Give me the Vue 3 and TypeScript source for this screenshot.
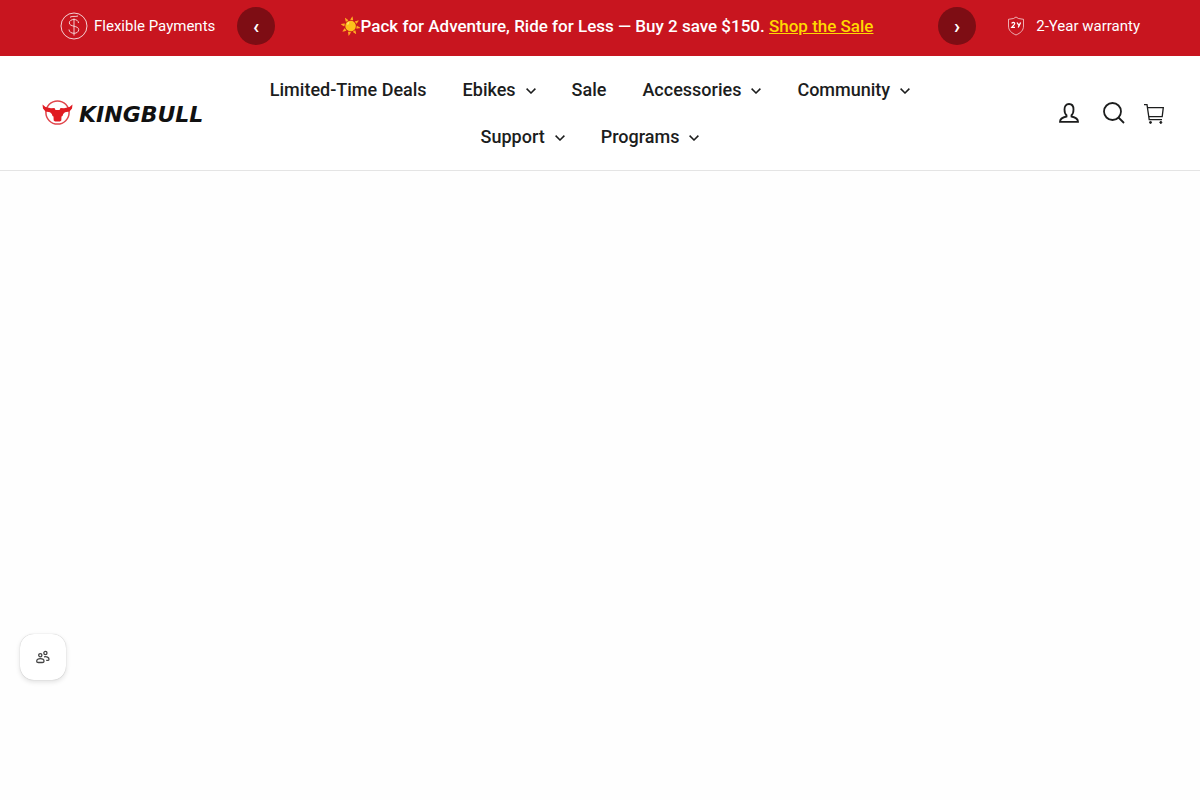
<script setup lang="ts">
interface NavItem {
  label: string
  menu: boolean
}

const items: NavItem[] = [
  { label: 'Limited-Time Deals', menu: false },
  { label: 'Ebikes', menu: true },
  { label: 'Sale', menu: false },
  { label: 'Accessories', menu: true },
  { label: 'Community', menu: true },
  { label: 'Support', menu: true },
  { label: 'Programs', menu: true },
]
</script>

<template>
  <div class="page">
    <section class="bar" aria-label="Announcements">
      <div class="perk">
        <svg class="coin" viewBox="0 0 28 28" fill="none" stroke="currentColor" aria-hidden="true">
          <circle cx="14" cy="14" r="13" />
          <path d="M10 5.200c3-1.600 5-.2 8-1.200M14 6.500v17M18.500 11c0-2.200-2-3.500-4.500-3.500s-4.700 1.200-4.700 3.400c0 4.200 9.400 2.400 9.400 6.700 0 2.300-2.100 3.700-4.700 3.700s-5-1.400-5-3.800" />
        </svg>
        <span>Flexible Payments</span>
      </div>
      <button class="arrow" type="button" aria-label="Previous announcement">‹</button>
      <p class="message">☀️Pack for Adventure, Ride for Less — Buy 2 save $150. <a href="#sale">Shop the Sale</a></p>
      <button class="arrow" type="button" aria-label="Next announcement">›</button>
      <div class="perk perk-end">
        <svg class="shield" viewBox="0 0 18 20" fill="none" stroke="currentColor" aria-hidden="true">
          <path opacity=".65" d="M9 1 L11.500 2.500 L16.500 3.300 V10 C16.500 14.500 13.500 17 9 19 C4.500 17 1.500 14.500 1.500 10 V3.300 L6.500 2.500 Z" />
          <path stroke-width="1.300" d="M4.800 7.500c.3-1.500 3-1.400 2.800.3-.1 1.200-1.700 2-2.800 3.500h3.200M10 6.500l1.800 2.700M13.600 6.500 11.200 11.500" />
        </svg>
        <span>2-Year warranty</span>
      </div>
    </section>

    <header class="header">
      <a class="logo" href="#home" aria-label="Kingbull">
        <svg class="bull" viewBox="0 0 31 26" aria-hidden="true">
          <circle cx="15.500" cy="12.500" r="11.600" fill="none" stroke="#e0444a" stroke-width="1.500" />
          <path fill="#e01b22" d="M.5 4.500 L3.500 7 L9 8.200 L12.500 8 L13.500 10 H17.500 L18.500 8 L22 8.200 L27.500 7 L30.500 4.500 L30 8.500 L27.500 11.500 L23 12.200 L21.200 14 L20.500 16 L19.500 16.500 L19.300 20.500 L18 21.500 H13 L11.700 20.500 L11.500 16.500 L10.500 16 L9.800 14 L8 12.200 L3.500 11.500 L1 8.500 Z" />
        </svg>
        <span class="wordmark">KINGBULL</span>
      </a>

      <nav aria-label="Main">
        <ul class="nav">
          <li v-for="item in items" :key="item.label">
            <a href="#">
              {{ item.label }}
              <svg v-if="item.menu" class="chevron" viewBox="0 0 10 6" fill="none" stroke="currentColor" stroke-width="1.500" aria-hidden="true">
                <path d="M.6.6 5 5 9.400.6" />
              </svg>
            </a>
          </li>
        </ul>
      </nav>

      <div class="tools">
        <a href="#account" aria-label="Account">
          <svg class="account" viewBox="0 0 20 20" fill="none" stroke="currentColor" stroke-width="1.800" aria-hidden="true">
            <path d="M7.500 12.200C6 11 5.500 9 5.500 6.500 5.500 3 7 1 10 1s4.500 2 4.500 5.500c0 2.500-.5 4.500-2 5.700v1.300c4 .8 6.500 2 6.500 5.300H1c0-3.300 2.500-4.500 6.500-5.300z" />
          </svg>
        </a>
        <a href="#search" aria-label="Search">
          <svg class="search" viewBox="0 0 22 22" fill="none" stroke="currentColor" stroke-width="1.800" aria-hidden="true">
            <circle cx="9.500" cy="9.500" r="8.500" />
            <path d="M15.500 15.500 21 21" />
          </svg>
        </a>
        <a class="cart-link" href="#cart" aria-label="Cart">
          <svg class="cart" viewBox="0 0 20 22" fill="none" stroke="currentColor" stroke-width="1.300" aria-hidden="true">
            <path d="M0 2.600H3L5.200 17.600H18M3.500 5.600H19.300L18.200 14.600H4.800" />
            <circle cx="6.500" cy="20.400" r="1" fill="currentColor" stroke-width="1" />
            <circle cx="16.800" cy="20.400" r="1" fill="currentColor" stroke-width="1" />
          </svg>
        </a>
      </div>
    </header>

    <main></main>

    <button class="community" type="button" aria-label="Open community">
      <svg viewBox="0 0 14 14" fill="none" stroke="currentColor" stroke-width="1.300" aria-hidden="true">
        <circle cx="4.300" cy="5.200" r="1.600" />
        <circle cx="9.400" cy="3" r="1.600" />
        <path d="M4.300 8.600c-2 0-3.600 1-3.600 2.600 0 1 .7 1.300 1.700 1.300h3.900c1 0 1.700-.3 1.700-1.300 0-1.600-1.700-2.600-3.700-2.600zM8 6.900c2.600-.7 5 .3 5 2.300 0 .9-.7 1.200-1.500 1.200h-1.300" />
      </svg>
    </button>
  </div>
</template>

<style>
body {
  margin: 0;
  background: #fefefe;
}
</style>

<style scoped>
.page {
  min-height: 100vh;
  color: #1c1d1d;
  font-family: Roboto, "Liberation Sans", sans-serif;
}

a {
  color: inherit;
  text-decoration: none;
}

.bar {
  display: flex;
  align-items: center;
  height: 52px;
  padding: 0 60px 4px;
  background: #c8151f;
  color: #fff;
}

.perk {
  display: flex;
  align-items: center;
  gap: 6px;
  width: 177px;
  font-size: 15px;
  line-height: 20px;
  white-space: nowrap;
}

.perk-end {
  justify-content: flex-end;
  gap: 11px;
  width: 164px;
}

.coin {
  width: 28px;
  height: 28px;
  opacity: 0.8;
}

.shield {
  width: 18px;
  height: 20px;
}

.arrow {
  flex: none;
  width: 38px;
  height: 38px;
  padding: 0;
  border: 0;
  border-radius: 50%;
  background: #7e0d14;
  color: #fff;
  font: 700 20px/36px Roboto, sans-serif;
}

.message {
  flex: 1;
  margin: 0;
  font-size: 17px;
  font-weight: 500;
  line-height: 24px;
  text-align: center;
}

.message a {
  color: #ffd800;
  text-decoration: underline;
}

.header {
  display: grid;
  grid-template-columns: 198px minmax(0, 1fr) 224px;
  align-items: center;
  padding: 10px 36px 10px 42px;
  border-bottom: 1px solid #e4e4e4;
  background: #fff;
}

.logo {
  display: flex;
  align-items: center;
  gap: 6px;
}

.bull {
  width: 31px;
  height: 26px;
}

.wordmark {
  padding-top: 4px;
  color: #111;
  font: italic 700 22px/28px "DejaVu Sans", sans-serif;
}

.nav {
  display: flex;
  flex-wrap: wrap;
  justify-content: center;
  margin: 0;
  padding: 0;
  list-style: none;
}

.nav a {
  display: flex;
  align-items: center;
  gap: 10px;
  padding: 0 18px;
  font-size: 18px;
  font-weight: 500;
  line-height: 47px;
  white-space: nowrap;
}

.chevron {
  width: 10px;
  height: 6px;
  margin-top: 2px;
}

.tools {
  display: flex;
  justify-content: flex-end;
  align-items: center;
}

.tools a {
  display: flex;
  margin-left: 24px;
}

.tools .cart-link {
  margin-left: 19px;
}

.account {
  width: 20px;
  height: 20px;
}

.search {
  width: 22px;
  height: 22px;
}

.cart {
  width: 20px;
  height: 22px;
}

.community {
  position: fixed;
  bottom: 120px;
  left: 20px;
  display: flex;
  align-items: center;
  justify-content: center;
  width: 46px;
  height: 46px;
  padding: 0;
  border: 0;
  border-radius: 14px;
  background: #fff;
  color: #444;
  box-shadow: 0 0 1px rgba(0, 0, 0, 0.3), 0 2px 5px rgba(0, 0, 0, 0.12);
}

.community svg {
  width: 14px;
  height: 14px;
}
</style>
